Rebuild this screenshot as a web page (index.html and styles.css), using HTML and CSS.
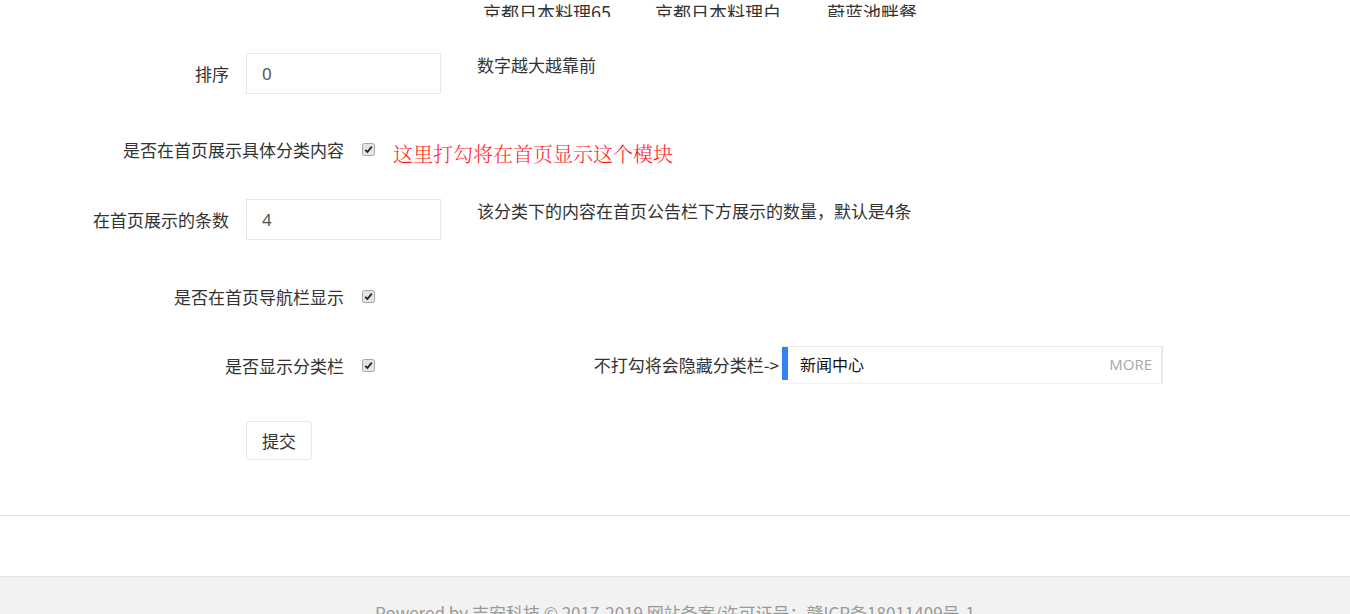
FILE: index.html
```html
<!DOCTYPE html>
<html lang="zh-CN">
<head>
    <meta charset="UTF-8">
    <title>栏目设置</title>
    <link rel="stylesheet" href="styles.css">
</head>
<body>
    <div class="top-cats">
        <span class="cat">京都日本料理65</span>
        <span class="cat">京都日本料理白</span>
        <span class="cat">蔚蓝池畔餐</span>
    </div>

    <form class="form">
        <div class="form-row row-sort">
            <label class="label">排序</label>
            <input class="input" type="text" value="0">
            <div class="hint">数字越大越靠前</div>
        </div>

        <div class="form-row row-check row-show">
            <label class="label-wide">是否在首页展示具体分类内容</label>
            <span class="check"><svg width="13" height="13" viewBox="0 0 13 13"><rect x="0.5" y="0.5" width="12" height="12" rx="2" fill="#e4e4e4" stroke="#a6a6a6"/><path d="M3.2 6.8 L5.4 9 L9.8 3.6" fill="none" stroke="#222" stroke-width="1.8"/></svg></span>
            <span class="tip-red">这里打勾将在首页显示这个模块</span>
        </div>

        <div class="form-row row-count">
            <label class="label">在首页展示的条数</label>
            <input class="input" type="text" value="4">
            <div class="hint">该分类下的内容在首页公告栏下方展示的数量，默认是4条</div>
        </div>

        <div class="form-row row-check row-nav">
            <label class="label-wide">是否在首页导航栏显示</label>
            <span class="check"><svg width="13" height="13" viewBox="0 0 13 13"><rect x="0.5" y="0.5" width="12" height="12" rx="2" fill="#e4e4e4" stroke="#a6a6a6"/><path d="M3.2 6.8 L5.4 9 L9.8 3.6" fill="none" stroke="#222" stroke-width="1.8"/></svg></span>
        </div>

        <div class="form-row row-bar">
            <label class="label-wide">是否显示分类栏</label>
            <span class="check"><svg width="13" height="13" viewBox="0 0 13 13"><rect x="0.5" y="0.5" width="12" height="12" rx="2" fill="#e4e4e4" stroke="#a6a6a6"/><path d="M3.2 6.8 L5.4 9 L9.8 3.6" fill="none" stroke="#222" stroke-width="1.8"/></svg></span>
            <span class="bar-tip">不打勾将会隐藏分类栏-&gt;</span>
            <div class="panel">
                <span class="panel-mark"></span>
                <span class="panel-title">新闻中心</span>
                <span class="panel-more">MORE</span>
            </div>
        </div>

        <div class="form-row row-submit">
            <span class="label"></span>
            <button class="btn" type="button">提交</button>
        </div>
    </form>

    <div class="divider"></div>

    <div class="footer">
        Powered by 吉安科技 © 2017-2019 网站备案/许可证号：赣ICP备18011409号-1
    </div>
</body>
</html>
```

FILE: styles.css
```css
body {
    margin: 0;
    background-color: #ffffff;
    color: #333333;
    font-family: "Noto Sans CJK SC", "Noto Sans", sans-serif;
    font-size: 17px;
}
.top-cats {
    height: 17px;
    overflow: hidden;
    display: flex;
    padding-left: 483px;
}
.cat {
    width: 172px;
    font-size: 18px;
    line-height: 24px;
    color: #333333;
}
.form {
    margin: 0;
}
.form-row {
    display: flex;
    align-items: center;
}
.label {
    width: 229px;
    margin-right: 17px;
    text-align: right;
    flex-shrink: 0;
}
.label-wide {
    width: 344px;
    text-align: right;
    flex-shrink: 0;
}
.input {
    width: 195px;
    height: 41px;
    box-sizing: border-box;
    border: 1px solid #e6e6e6;
    padding: 0 15px;
    font-family: "Noto Sans", "Noto Sans CJK SC", sans-serif;
    font-size: 17px;
    color: #555555;
    outline: none;
}
.hint {
    align-self: flex-start;
    margin-left: 36px;
    line-height: 24px;
}
.row-sort {
    margin-top: 36px;
}
.row-check {
    height: 24px;
}
.row-show {
    margin-top: 43px;
}
.check {
    display: flex;
    margin-left: 18px;
    width: 13px;
    height: 13px;
}
.tip-red {
    margin-left: 18px;
    margin-top: 9px;
    color: #ff1a1a;
    font-family: "Noto Serif CJK SC", "Noto Sans CJK SC", serif;
    font-size: 20px;
    font-weight: 300;
}
.row-count {
    margin-top: 38px;
}
.row-nav {
    margin-top: 44px;
}
.row-bar {
    margin-top: 38px;
}
.bar-tip {
    width: 404px;
    text-align: right;
    margin-top: -2px;
}
.panel {
    margin-left: 2px;
    width: 382px;
    height: 38px;
    box-sizing: border-box;
    border-top: 1px solid #ececec;
    border-right: 2px solid #e8e8e8;
    border-bottom: 1px solid #f0f0f0;
    display: flex;
    align-items: center;
    padding-bottom: 3px;
}
.panel-mark {
    width: 6px;
    height: 33px;
    margin-left: 1px;
    background-color: #3283f0;
    align-self: flex-start;
}
.panel-title {
    margin-left: 12px;
    font-size: 16px;
    color: #111111;
}
.panel-more {
    margin-left: auto;
    margin-right: 9px;
    font-family: "Open Sans", sans-serif;
    font-size: 15px;
    color: #a8a8a8;
}
.row-submit {
    margin-top: 37px;
}
.btn {
    height: 39px;
    padding: 0 15px;
    border: 1px solid #e6e6e6;
    border-radius: 3px;
    background-color: #ffffff;
    color: #333333;
    font-family: "Noto Sans CJK SC", sans-serif;
    font-size: 17px;
}
.divider {
    margin-top: 55px;
    border-top: 1px solid #dde3e6;
}
.footer {
    margin-top: 60px;
    border-top: 1px solid #e4e4e4;
    background-color: #f2f2f2;
    padding: 26px 0 30px;
    text-align: center;
    font-size: 17px;
    line-height: 20px;
    color: #999999;
}
```
